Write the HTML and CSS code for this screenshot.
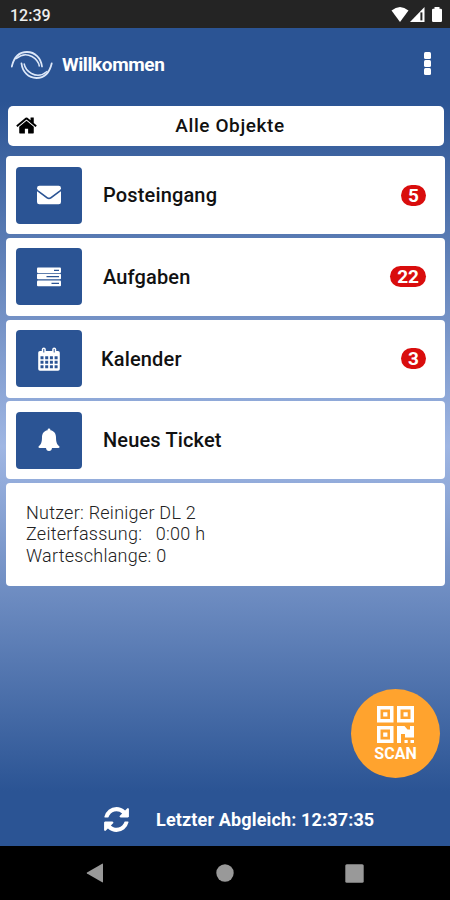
FILE: index.html
```html
<!DOCTYPE html>
<html lang="de">
<head>
    <meta charset="UTF-8">
    <meta name="viewport" content="width=device-width, initial-scale=1.0">
    <title>Willkommen</title>
    <link rel="stylesheet" href="styles.css">
</head>
<body>
    <div class="status-bar">
        <span class="status-time">12:39</span>
        <svg class="status-icons" width="52" height="18" viewBox="0 0 52 18" fill="#fff">
            <path d="M0.5 4.600Q9 -2.400 17.500 4.600L9 16z"/>
            <path d="M33.500 1v15H19z"/>
            <path d="M29.400 6.400h2v8h-2z" fill="#242424"/>
            <path d="M43.500 1h5v1.800h1.300q1.200 0 1.200 1.200v10.800q0 1.200-1.200 1.200h-7.600q-1.200 0-1.200-1.200V4q0-1.200 1.200-1.200h1.300z"/>
        </svg>
    </div>

    <header class="header">
        <svg class="logo" width="42" height="30" viewBox="0 0 42 30" fill="none" stroke="#dce7f8" stroke-linecap="round">
            <path d="M.8 16.500C3 7 8.500 2 16 2C24 2 30 8 31 16.500" stroke-width="1.800"/>
            <path d="M5.500 8.500C10 4.600 16 3.800 21 6.500C25 8.800 27.600 12 28.300 16" stroke-width="1.500"/>
            <path d="M40.700 13.500C38.500 23 33 28 25.500 28C17.500 28 11.500 22 10.500 13.500" stroke-width="1.800"/>
            <path d="M36 21.500C31.500 25.400 25.500 26.200 20.500 23.500C16.500 21.200 13.900 18 13.200 14" stroke-width="1.500"/>
        </svg>
        <h1>Willkommen</h1>
        <div class="menu-dots">
            <span></span>
            <span></span>
            <span></span>
        </div>
    </header>

    <main class="content">
        <div class="object-select">
            <svg class="home-icon" width="21" height="23" viewBox="0 0 1664 1792">
                <path d="M1408 992v480q0 26-19 45t-45 19h-384v-384h-256v384h-384q-26 0-45-19t-19-45v-480q0-1 .5-3t.5-3l575-474 575 474q1 2 1 6zm223-69l-62 74q-8 9-21 11h-3q-13 0-21-7l-692-577-692 577q-12 8-24 7-13-2-21-11l-62-74q-8-10-7-23.500t11-21.500l719-599q32-26 76-26t76 26l244 204v-195q0-14 9-23t23-9h192q14 0 23 9t9 23v408l219 182q10 8 11 21.500t-7 23.500z"/>
            </svg>
            <span class="object-name">Alle Objekte</span>
        </div>

        <div class="card">
            <div class="card-icon">
                <svg width="24" height="20" viewBox="0 0 24 20" fill="#fff">
                    <path d="M0 3.200Q0 .8 2.400.8h19.200Q24 .8 24 3.200q0 1-1.300 2L13.600 12q-1.600 1.100-3.200 0L1.300 5.200Q0 4.200 0 3.200z"/>
                    <path d="M0 6.200l9.700 7.200q2.300 1.600 4.600 0L24 6.200V17q0 2.200-2.300 2.200H2.300Q0 19.200 0 17z"/>
                </svg>
            </div>
            <span class="card-title">Posteingang</span>
            <span class="badge">5</span>
        </div>
        <div class="card">
            <div class="card-icon">
                <svg width="24" height="20" viewBox="0 0 24 20">
                    <rect x="0" y="0.500" width="24" height="5.500" rx="1" fill="#fff"/>
                    <rect x="0" y="6.700" width="24" height="5.500" rx="1" fill="#fff"/>
                    <rect x="0" y="13.500" width="24" height="5.800" rx="1" fill="#fff"/>
                    <path d="M17 3.400h5M9.500 9.600H22M14.500 16.400H22" stroke="#2b5494" stroke-width="1.300"/>
                </svg>
            </div>
            <span class="card-title">Aufgaben</span>
            <span class="badge">22</span>
        </div>
        <div class="card">
            <div class="card-icon">
                <svg width="22" height="24" viewBox="0 0 22 24">
                    <path d="M2 4h18q1.800 0 1.800 1.800V22q0 1.800-1.800 1.800H2Q.2 23.800.2 22V5.800Q.2 4 2 4z" fill="#fff"/>
                    <rect x="3.800" y="0.500" width="4" height="6" rx="2" fill="#fff"/>
                    <rect x="14.200" y="0.500" width="4" height="6" rx="2" fill="#fff"/>
                    <path d="M5.800 2v3.500M16.200 2v3.500" stroke="#2b5494" stroke-width="1"/>
                    <path d="M2.500 9.300h3v2.900h-3zM7.200 9.300h3v2.900h-3zM11.900 9.300h3v2.900h-3zM16.600 9.300h3v2.900h-3zM2.500 13.800h3v2.900h-3zM7.200 13.800h3v2.900h-3zM11.900 13.800h3v2.900h-3zM16.600 13.800h3v2.900h-3zM2.500 18.300h3v2.900h-3zM7.200 18.300h3v2.900h-3zM11.900 18.300h3v2.900h-3zM16.600 18.300h3v2.900h-3z" fill="#2b5494"/>
                </svg>
            </div>
            <span class="card-title shifted">Kalender</span>
            <span class="badge">3</span>
        </div>
        <div class="card">
            <div class="card-icon">
                <svg width="22" height="24" viewBox="0 0 22 24" fill="#fff">
                    <path d="M9.600 2.200V1.700Q9.600.5 11 .5t1.400 1.200v.5C16.500 2.900 18 6 18 9.200c0 5.200 1.200 7.500 3.500 9.300q.3 1.500-1.300 1.500H1.800Q.2 20 .5 18.500C2.800 16.700 4 14.400 4 9.200c0-3.200 1.500-6.300 5.600-7z"/>
                    <path d="M8 20h6q-.3 3-3 3t-3-3z"/>
                </svg>
            </div>
            <span class="card-title">Neues Ticket</span>
        </div>

        <div class="info">
            <div>Nutzer: Reiniger DL 2</div>
            <div>Zeiterfassung: <span class="time-value">0:00 h</span></div>
            <div>Warteschlange: 0</div>
        </div>

        <div class="scan-button">
            <svg width="37" height="37" viewBox="0 0 37 37" fill="#fff">
                <path fill-rule="evenodd" d="M0 0h16.500v16.500H0zM3.500 3.500V13H13V3.500zM20 0h17v16.500H20zM23.500 3.500V13h10V3.500zM0 20h16.500v17H0zM3.500 23.500v10H13v-10z"/>
                <path d="M6.200 6.200h4.200v4.200H6.200zM26.500 6.200h4.200v4.200h-4.200zM6.200 26.500h4.200v4.200H6.200z"/>
                <path d="M20 20h7.500l3 3.500h2.500V20h4v11.500h-9V28h-4v9h-4zM27.500 34h3.200v3h-3.200zM33.500 34H37v3h-3.500z"/>
            </svg>
            <span>SCAN</span>
        </div>
    </main>

    <footer class="sync">
        <svg class="sync-icon" width="25" height="29" viewBox="0 0 1536 1792" fill="#fff">
            <path d="M1511 1056q0 5-1 7-64 268-268 434.500t-478 166.500q-146 0-282.500-55t-243.500-157l-129 129q-19 19-45 19t-45-19-19-45v-448q0-26 19-45t45-19h448q26 0 45 19t19 45-19 45l-137 137q71 66 161 102t187 36q134 0 250-65t186-179q11-17 53-117 8-23 30-23h192q13 0 22.500 9.500t9.500 22.500zm25-800v448q0 26-19 45t-45 19h-448q-26 0-45-19t-19-45 19-45l138-138q-148-137-349-137-134 0-250 65t-186 179q-11 17-53 117-8 23-30 23h-199q-13 0-22.500-9.500t-9.500-22.500v-7q65-268 270-434.500t480-166.500q146 0 284 55.500t245 156.500l130-129q19-19 45-19t45 19 19 45z"/>
        </svg>
        <span>Letzter Abgleich: 12:37:35</span>
    </footer>

    <nav class="nav-bar">
        <svg width="18" height="20" viewBox="0 0 18 20" fill="#999"><path d="M16.200.7Q17 .3 17 1.200v17.600q0 .9-.8.500L1 10.500q-.8-.5 0-1z"/></svg>
        <svg width="18" height="18" viewBox="0 0 18 18" fill="#999"><circle cx="9" cy="9" r="8.700"/></svg>
        <svg width="19" height="19" viewBox="0 0 19 19" fill="#999"><rect x="0.300" y="0.300" width="18.400" height="18.400" rx="1.500"/></svg>
    </nav>
</body>
</html>
```

FILE: styles.css
```css
* {
    margin: 0;
    padding: 0;
    box-sizing: border-box;
}

body {
    height: 900px;
    display: flex;
    flex-direction: column;
    overflow: hidden;
    background: #2b5494;
    font-family: Roboto, sans-serif;
    color: #111;
}

svg {
    display: block;
    flex-shrink: 0;
}

.status-bar {
    height: 28px;
    padding: 0 7px 0 10px;
    display: flex;
    justify-content: space-between;
    align-items: center;
    background: #242424;
    color: #eee;
}

.status-icons {
    margin-top: 2px;
}

.status-time {
    font-size: 16px;
    font-weight: 500;
    padding-top: 2px;
}

.header {
    height: 74px;
    padding: 0 19px 2px 11px;
    display: flex;
    align-items: center;
    color: #fff;
}

.logo {
    margin-top: 1px;
}

.header h1 {
    flex: 1;
    margin-left: 9px;
    font-size: 19px;
    font-weight: 700;
    letter-spacing: -0.4px;
}

.menu-dots {
    display: flex;
    flex-direction: column;
    gap: 1.5px;
    margin-top: -1px;
}

.menu-dots span {
    width: 7px;
    height: 6.5px;
    border-radius: 1.5px;
    background: #fff;
}

.content {
    position: relative;
    height: 689px;
    padding: 4px 5px 0 6px;
    display: flex;
    flex-direction: column;
    gap: 3.7px;
    background: linear-gradient(#2b5494, #9fb6e3 50%, #2b5494);
}

.object-select {
    height: 39.5px;
    margin: 0 1px 7px 2px;
    padding: 0 8px;
    display: flex;
    align-items: center;
    background: #fff;
    border-radius: 5px;
}

.object-name {
    flex: 1;
    padding-right: 13px;
    text-align: center;
    font-size: 19px;
    font-weight: 500;
    letter-spacing: 0.6px;
}

.card {
    height: 78px;
    padding: 0 19px 0 10px;
    display: flex;
    align-items: center;
    background: #fff;
    border-radius: 4px;
}

.card-icon {
    width: 66px;
    height: 57px;
    display: flex;
    justify-content: center;
    align-items: center;
    background: #2b5494;
    border-radius: 4px;
}

.card-title {
    flex: 1;
    margin-left: 21px;
    font-size: 20px;
    font-weight: 500;
    letter-spacing: 0.15px;
}

.card-title.shifted {
    margin-left: 19px;
}

.badge {
    min-width: 25px;
    height: 21px;
    padding: 0 7px;
    border-radius: 11px;
    background: #d90d0d;
    color: #fff;
    font-size: 19px;
    font-weight: 700;
    line-height: 21px;
    text-align: center;
}

.info {
    height: 103px;
    padding: 19px 20px;
    background: #fff;
    border-radius: 4px;
    color: #222;
    font-size: 18px;
    font-weight: 300;
    line-height: 21.5px;
    letter-spacing: 0.25px;
}

.time-value {
    margin-left: 9px;
}

/* floats above the list */
.scan-button {
    position: absolute;
    right: 10px;
    bottom: 13px;
    width: 89px;
    height: 89px;
    padding-top: 17px;
    display: flex;
    flex-direction: column;
    align-items: center;
    gap: 2px;
    border-radius: 50%;
    background: #ffa32e;
    color: #fff;
    font-size: 16px;
    font-weight: 700;
    line-height: 18px;
}

.sync {
    height: 55px;
    padding: 2px 0 0 104px;
    display: flex;
    align-items: center;
    gap: 27px;
    color: #fff;
    font-size: 18px;
    font-weight: 700;
    letter-spacing: 0.15px;
}

.nav-bar {
    height: 54px;
    padding: 0 86px;
    display: flex;
    justify-content: space-between;
    align-items: center;
    background: #000;
}
```
